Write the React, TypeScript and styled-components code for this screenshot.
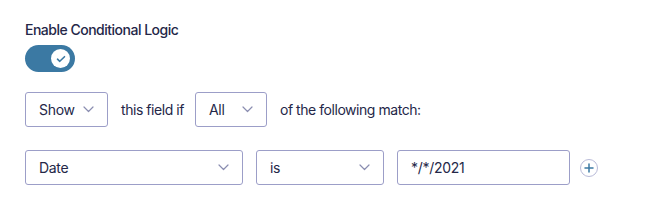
import React from "react";
import styled, { createGlobalStyle } from "styled-components";

const Global = createGlobalStyle`
  html, body { margin: 0; padding: 0; background: #fff; }
  body { font-family: Inter, "Noto Sans", sans-serif; color: #242748; }
`;

const Page = styled.div`
  padding: 20px 25px;
  display: flex;
  flex-direction: column;
`;

const Label = styled.div`
  font-size: 14px;
  font-weight: 500;
  line-height: 20px;
  letter-spacing: -0.5px;
  color: #242748;
`;

const Toggle = styled.div`
  margin-top: 5px;
  width: 50px;
  height: 27px;
  border-radius: 14px;
  background: #3b79a3;
  display: flex;
  align-items: center;
  justify-content: flex-end;
  padding-right: 5px;
  box-sizing: border-box;
`;

const Knob = styled.div`
  width: 19px;
  height: 19px;
  border-radius: 50%;
  background: #fff;
  display: flex;
  align-items: center;
  justify-content: center;
`;

const Row = styled.div<{ $top: number }>`
  display: flex;
  align-items: center;
  margin-top: ${(p) => p.$top}px;
  gap: 13px;
`;

const Select = styled.div<{ $w: number }>`
  width: ${(p) => p.$w}px;
  height: 35px;
  box-sizing: border-box;
  border: 1px solid #9c9ec8;
  border-radius: 3px;
  display: flex;
  align-items: center;
  justify-content: space-between;
  padding: 0 13px 0 13px;
  font-size: 14px;
  letter-spacing: -0.3px;
  color: #242748;
`;

const Text = styled.span`
  font-size: 14px;
  letter-spacing: -0.45px;
  color: #242748;
  margin-right: -2px;
`;

const PlusBtn = styled.div`
  width: 18px;
  height: 18px;
  border-radius: 50%;
  border: 1px solid #b9bbd8;
  box-sizing: border-box;
  display: flex;
  align-items: center;
  justify-content: center;
  margin-left: -3px;
`;

const Chevron = () => (
  <svg width="11" height="7" viewBox="0 0 11 7" fill="none">
    <path d="M1 1l4.5 4.5L10 1" stroke="#8a8db0" strokeWidth="1.2" strokeLinecap="round" strokeLinejoin="round" />
  </svg>
);

export default function App() {
  return (
    <>
      <Global />
      <Page>
        <Label>Enable Conditional Logic</Label>
        <Toggle>
          <Knob>
            <svg width="10" height="8" viewBox="0 0 10 8" fill="none">
              <path d="M1.5 4.2L3.8 6.3 8.5 1.7" stroke="#3b79a3" strokeWidth="1.6" strokeLinecap="round" strokeLinejoin="round" />
            </svg>
          </Knob>
        </Toggle>
        <Row $top={20}>
          <Select $w={83}>
            <span>Show</span>
            <Chevron />
          </Select>
          <Text>this field if</Text>
          <Select $w={72}>
            <span>All</span>
            <Chevron />
          </Select>
          <Text>of the following match:</Text>
        </Row>
        <Row $top={23}>
          <Select $w={218}>
            <span>Date</span>
            <Chevron />
          </Select>
          <Select $w={128}>
            <span>is</span>
            <Chevron />
          </Select>
          <Select $w={173}>
            <span>*/*/2021</span>
          </Select>
          <PlusBtn>
            <svg width="10" height="10" viewBox="0 0 10 10" fill="none">
              <path d="M5 1v8M1 5h8" stroke="#3b79a3" strokeWidth="1.5" strokeLinecap="round" />
            </svg>
          </PlusBtn>
        </Row>
      </Page>
    </>
  );
}
